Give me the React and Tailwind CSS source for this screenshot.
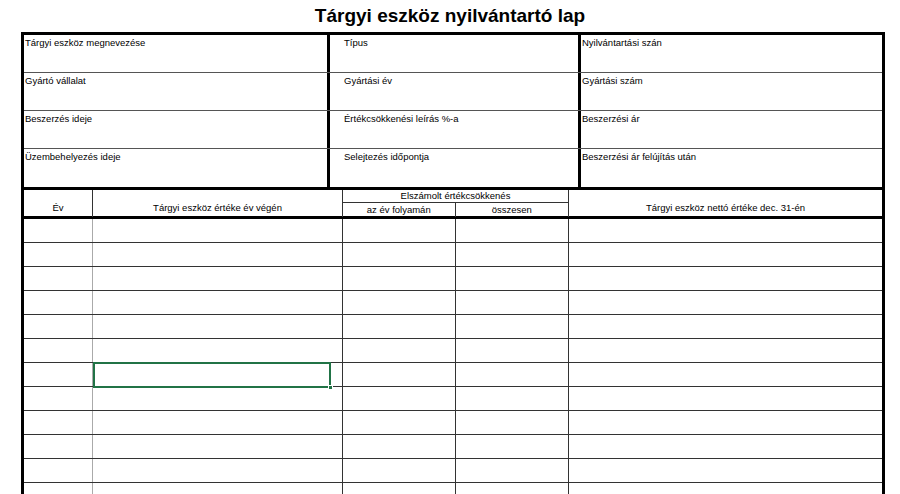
const info = [
  ['Tárgyi eszköz megnevezése', 'Típus', 'Nyilvántartási szán'],
  ['Gyártó vállalat', 'Gyártási év', 'Gyártási szám'],
  ['Beszerzés ideje', 'Értékcsökkenési leírás %-a', 'Beszerzési ár'],
  ['Üzembehelyezés ideje', 'Selejtezés időpontja', 'Beszerzési ár felújítás után'],
]

const rows = Array.from({ length: 12 })

export default function App() {
  return (
    <div className="w-[900px] h-[494px] overflow-hidden bg-white text-black font-[Liberation_Sans]">
      <div className="h-[32px] flex items-center justify-center text-[19px] font-bold">
        Tárgyi eszköz nyilvántartó lap
      </div>
      <div className="ml-[21px] w-[864px] border-x-[3px] border-t-[3px] border-black">
        {/* info block */}
        {info.map((r, i) => (
          <div key={i} className={`grid grid-cols-[306px_251px_1fr] h-[38px] ${i < 3 ? 'border-b border-[#555]' : ''}`}>
            <div className="border-r-[3px] border-black text-[9.5px] pl-[1px] pt-[1px]">{r[0]}</div>
            <div className="border-r-[3px] border-black text-[9.5px] pl-[14px] pt-[1px]">{r[1]}</div>
            <div className="text-[9.5px] pl-[1px] pt-[1px]">{r[2]}</div>
          </div>
        ))}
        {/* header */}
        <div className="grid grid-cols-[69px_250px_113px_113px_1fr] h-[32px] border-t-[3px] border-b-[3px] border-black text-[9.5px]">
          <div className="border-r border-[#333] flex items-end justify-center pb-[2px]">Év</div>
          <div className="border-r border-[#333] flex items-end justify-center pb-[2px]">Tárgyi eszköz értéke év végén</div>
          <div className="col-span-2 border-r border-[#333] flex flex-col">
            <div className="h-[13px] border-b border-[#333] flex items-center justify-center">Elszámolt értékcsökkenés</div>
            <div className="flex-1 grid grid-cols-2">
              <div className="border-r border-[#333] flex items-center justify-center">az év folyamán</div>
              <div className="flex items-center justify-center">összesen</div>
            </div>
          </div>
          <div className="flex items-end justify-center pb-[2px]">Tárgyi eszköz nettó értéke dec. 31-én</div>
        </div>
        {/* data rows */}
        <div className="relative">
          {rows.map((_, i) => (
            <div key={i} className="grid grid-cols-[69px_250px_113px_113px_1fr] h-[24px] border-b border-[#333]">
              <div className="border-r border-[#aaa]" />
              <div className="border-r border-[#333]" />
              <div className="border-r border-[#333]" />
              <div className="border-r border-[#333]" />
              <div />
            </div>
          ))}
          <div className="absolute left-[69px] top-[143px] w-[238px] h-[26px] border-2 border-[#217346]">
            <div className="absolute -right-[4px] -bottom-[4px] w-[5px] h-[5px] bg-[#217346] border border-white" />
          </div>
        </div>
      </div>
    </div>
  )
}
